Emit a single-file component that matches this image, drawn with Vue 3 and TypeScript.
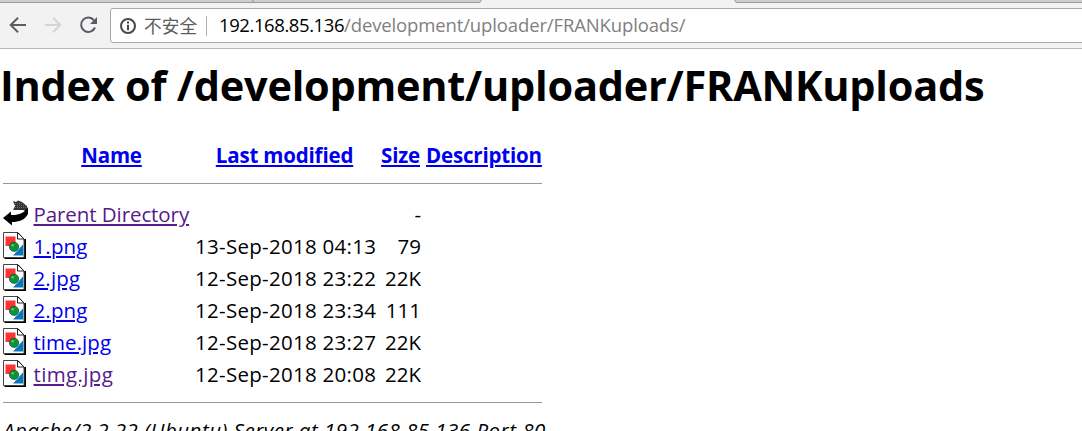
<script setup lang="ts">
interface Entry {
  name: string
  modified: string
  size: string
  visited: boolean
  cls: string
}

const entries: Entry[] = [
  { name: 'Parent Directory', modified: '', size: '-', visited: true, cls: 'parent' },
  { name: '1.png', modified: '13-Sep-2018 04:13', size: '79', visited: false, cls: 'png' },
  { name: '2.jpg', modified: '12-Sep-2018 23:22', size: '22K', visited: false, cls: 'jpg' },
  { name: '2.png', modified: '12-Sep-2018 23:34', size: '111', visited: false, cls: 'png' },
  { name: 'time.jpg', modified: '12-Sep-2018 23:27', size: '22K', visited: false, cls: 'time' },
  { name: 'timg.jpg', modified: '12-Sep-2018 20:08', size: '22K', visited: true, cls: 'timg' },
]
</script>

<template>
  <div class="window">
    <header class="chrome">
      <svg class="tabs" width="1082" height="3" viewBox="0 0 1082 3">
        <rect width="1082" height="2" fill="#cecece" />
        <rect y="2" width="1082" height="1" fill="#999" />
        <path d="M252 0L254 2" stroke="#8c8c8c" />
        <path d="M481 0H735L737 3H479Z" fill="#f2f2f2" />
        <path d="M481.5 0L480 2.5H478M734.5 0L736 2.5H738" fill="none" stroke="#999" />
      </svg>
      <div class="toolbar">
        <svg class="nav" width="110" height="36" viewBox="0 0 110 36" fill="none">
          <path d="M26 17H11M18 9.7L10.7 17L18 24.3" stroke="#5a5d61" stroke-width="2" />
          <path d="M45 17H60M53 9.7L60.3 17L53 24.3" stroke="#d3d5d3" stroke-width="2" />
          <path d="M94 12.3A7.2 7.2 0 1 0 95 19.5" stroke="#5a5d61" stroke-width="2" />
          <path d="M97 9V16H90Z" fill="#5a5d61" />
        </svg>
        <div class="omnibox">
          <svg class="info" width="16" height="16" viewBox="0 0 16 16">
            <circle cx="8" cy="8" r="7" fill="none" stroke="#484848" stroke-width="2" />
            <path d="M7 3.6H9V5.6H7ZM7 6.8H9V12.2H7Z" fill="#484848" />
          </svg>
          <span class="security">不安全</span>
          <span class="divider"></span>
          <span class="host">192.168.85.136</span><span class="path">/development/uploader/FRANKuploads/</span>
        </div>
      </div>
    </header>

    <main>
      <h1><span>Index of /development/uploader/FRANKuploads</span></h1>
      <div class="listing">
        <div class="row head">
          <span></span>
          <a class="h-name">Name</a>
          <a class="h-mod">Last modified</a>
          <a class="h-size">Size</a>
          <a class="h-desc">Description</a>
        </div>
        <hr />
        <div v-for="entry in entries" :key="entry.name" class="row">
          <svg v-if="entry.cls === 'parent'" class="icon" width="25" height="27" viewBox="0 0 25 27">
            <path d="M10 1L13 2L15 .5L19 2L24 6V12L20 10L10 10L12 6Z" fill="#333" />
            <path d="M12 3.5H20M12 5.5H23M12 7.5H24" stroke="#888" stroke-width=".7" stroke-dasharray="1 1" />
            <path d="M25 7V14C22 20 16 22 9 22V25.5L0 18L8 11.5V15C15 15.5 22 13 25 7Z" fill="#000" />
          </svg>
          <svg v-else class="icon" width="23" height="27" viewBox="0 0 23 27">
            <path d="M1.5 26H22V7" fill="none" stroke="#000" stroke-width="2" />
            <path d="M.5 .5H15L21 7V25.5H.5Z" fill="#fff" stroke="#444" />
            <path d="M14.5 .5V7H21Z" fill="#fff" stroke="#222" />
            <path d="M2.5 4.5H12.5V14H2.5Z" fill="#f33" />
            <path d="M20 12.5V23.5H10Z" fill="#0877bd" />
            <circle cx="11" cy="14.8" r="4.6" fill="#079536" stroke="#155126" stroke-width=".8" />
            <circle cx="9.7" cy="13.3" r="1.3" fill="#68bd77" />
          </svg>
          <span><a :class="[entry.cls, { visited: entry.visited }]">{{ entry.name }}</a></span>
          <span class="date">{{ entry.modified }}</span>
          <span class="size">{{ entry.size }}</span>
          <span></span>
        </div>
        <hr class="last" />
      </div>
      <address>Apache/2.2.22 (Ubuntu) Server at 192.168.85.136 Port 80</address>
    </main>
  </div>
</template>

<style>
body {
  background: #fff;
  overflow: hidden;
}
</style>

<style scoped>
.window {
  width: 1082px;
  height: 431px;
  overflow: hidden;
  background: #fff;
  color: #000;
  font-family: "Open Sans", "Noto Sans", "Noto Sans CJK SC", sans-serif;
  font-size: 20.5px;
  white-space: nowrap;
}
.chrome {
  height: 49px;
  box-sizing: border-box;
  background: #f2f2f2;
  border-bottom: 1px solid #b6b6b6;
}
.tabs {
  display: block;
}
.toolbar {
  display: flex;
  padding-top: 5px;
}
.nav {
  flex: none;
}
.omnibox {
  display: flex;
  align-items: center;
  box-sizing: border-box;
  width: 980px;
  flex: none;
  height: 35px;
  padding-left: 9px;
  background: #fff;
  border: 1px solid #a8a8a8;
  border-radius: 3px;
  font-size: 18.5px;
  line-height: 24px;
}
.info {
  flex: none;
}
.security {
  width: 54px;
  margin: -2px 0 0 8px;
  font-family: "Noto Sans CJK SC", sans-serif;
  font-size: 17.7px;
  color: #5c5c5c;
}
.divider {
  width: 1px;
  height: 20px;
  margin: 0 12px 0 8px;
  background: #b0b0b0;
}
.host,
.path {
  margin-top: -2px;
}
.host {
  letter-spacing: -0.42px;
}
.path {
  color: #808080;
  letter-spacing: -0.13px;
}
main {
  padding-left: 3px;
}
h1 {
  height: 90px;
  margin: 0 0 0 -3px;
  padding-top: 8px;
  box-sizing: border-box;
  font-size: 41.5px;
  line-height: 56px;
  font-weight: 700;
  letter-spacing: -0.25px;
}
.listing {
  width: 539px;
}
.row {
  display: grid;
  grid-template-columns: 30.5px 161.5px 181px 45px 120px;
  align-items: center;
  height: 32px;
  line-height: 32px;
}
.head {
  font-weight: 700;
  grid-template-columns: 30px 157px 189px 41px 120px;
  letter-spacing: -0.18px;
}
.head a {
  justify-self: center;
}
.head .h-size {
  justify-self: end;
}
.head .h-desc {
  justify-self: start;
  margin-left: 6px;
}
a {
  color: #0000ee;
  text-decoration: underline;
  text-decoration-thickness: 2px;
  text-underline-offset: 2px;
}
a.visited {
  color: #551a8b;
}
a.parent {
  letter-spacing: -0.08px;
}
a.png,
a.jpg {
  letter-spacing: 0.15px;
}
a.time {
  letter-spacing: 0.05px;
}
a.timg {
  letter-spacing: 0.35px;
}
.icon {
  display: block;
  margin-top: -1px;
}
.date {
  letter-spacing: 0.28px;
}
.size {
  text-align: right;
}
hr {
  height: 0;
  margin: 12px 0 14px;
  border: 0;
  border-top: 1px solid #999;
}
hr.last {
  margin: 12px 0 13px;
}
address {
  line-height: 28px;
  letter-spacing: 0.5px;
}
</style>
